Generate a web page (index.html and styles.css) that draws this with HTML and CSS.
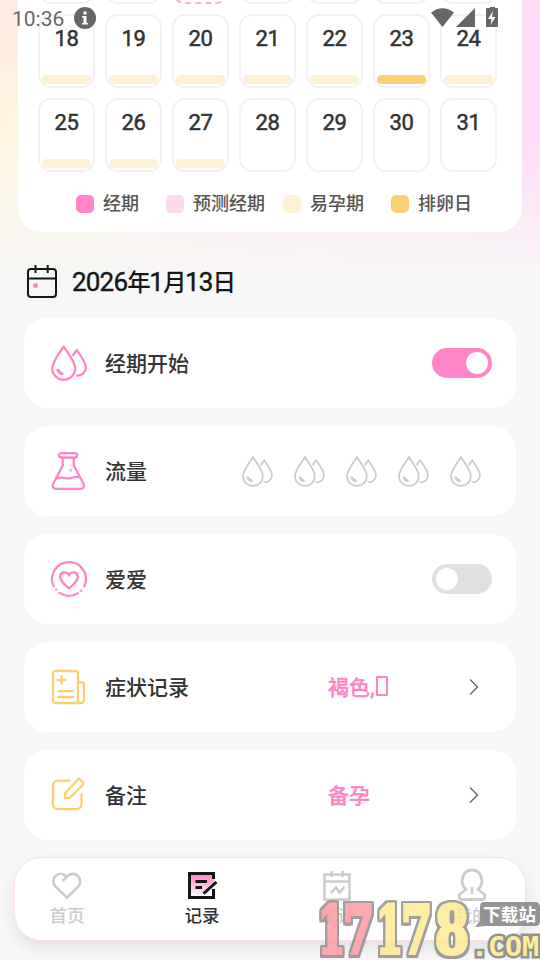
FILE: index.html
```
<!DOCTYPE html>
<html lang="zh-CN">
<head>
<meta charset="utf-8">
<title>记录</title>
<link rel="stylesheet" href="styles.css">
</head>
<body>
<svg class="defs" width="0" height="0" aria-hidden="true">
  <symbol id="drops" viewBox="0 0 36 36" overflow="visible">
    <path d="M12.700 1.500C9 7.500 1.200 16.500 1.200 23.600a11.500 11.200 0 0 0 23 0C24.200 16.500 16.400 7.500 12.700 1.500Z"/>
    <path d="M22.200 10 25.700 5C29.500 10.500 34.800 17 34.800 22.200c0 5.200-3.900 8.500-8.800 8.500"/>
    <path class="shine" d="M6.900 25.200c.7 1.800 2 2.800 4 3.500"/>
  </symbol>
</svg>
<div class="screen">
  <div class="status">
    <span class="clock">10:36</span>
    <svg class="info" width="22" height="22" viewBox="0 0 22 22"><circle cx="11" cy="11" r="11" fill="#666"/><path d="M9.500 4.500h3v3h-3zM8 9h4.500v7H14v1.500H8V16h1.500v-5.500H8z" fill="#fff"/></svg>
    <svg class="signals" width="68" height="22" viewBox="0 0 68 22" fill="#666"><path d="M0 5.500Q11.500-3.200 23 5.500L11.500 20ZM25 20 44 1v19ZM57 1h2V0h5v1h2q1 0 1 1v17q0 1-1 1H56q-1 0-1-1V2q0-1 1-1Z"/><path d="m62 4-5 8h3.500l-1 6 5-8h-3.500z" fill="#fff"/></svg>
  </div>

  <section class="calendar">
    <div class="days">
      <div class="day"></div><div class="day"></div><div class="day today"></div><div class="day"></div><div class="day"></div><div class="day"></div><div class="day"></div>
      <div class="day fertile">18</div><div class="day fertile">19</div><div class="day fertile">20</div><div class="day fertile">21</div><div class="day fertile">22</div><div class="day ovulation">23</div><div class="day fertile">24</div>
      <div class="day fertile">25</div><div class="day fertile">26</div><div class="day fertile">27</div><div class="day">28</div><div class="day">29</div><div class="day">30</div><div class="day">31</div>
    </div>
    <div class="legend">
      <span class="key period">经期</span>
      <span class="key predicted">预测经期</span>
      <span class="key easy">易孕期</span>
      <span class="key egg">排卵日</span>
    </div>
  </section>

  <h1 class="date">
    <svg width="32" height="34" viewBox="0 0 32 34" fill="none" stroke="#161616" stroke-width="2"><rect x="2" y="5" width="28" height="28" rx="3"/><path d="M2 14.500h28M9.500 1v8M21.700 1v8"/><circle cx="9.500" cy="21.500" r="2.500" fill="#ff85c6" stroke="none"/></svg>
    <span class="date-text">2026<b>年</b>1<b>月</b>13<b>日</b></span>
  </h1>

  <main class="rows">
    <div class="row">
      <svg class="icon pink" viewBox="0 0 36 36"><use href="#drops"/></svg>
      <span class="label">经期开始</span>
      <span class="switch on"></span>
    </div>
    <div class="row">
      <svg class="icon pink" viewBox="0 0 36 36"><path d="M10 .2h14a2 2 0 0 1 2 2c0 1.500-.9 2.300-2.300 2.300h-13C9.200 4.500 8 3.700 8 2.200a2 2 0 0 1 2-2ZM11.700 5v7.500L2.200 30.800c-1.400 2.800.2 5 3 5h24c3 0 4.700-2.200 3.300-5L22.800 12.500V5"/><path d="M5.500 25.500c7-2.500 10 1.300 15-.6 3-1.200 6-1.300 8.500-.8"/><circle cx="19.500" cy="17.500" r=".3"/></svg>
      <span class="label">流量</span>
      <span class="flow">
        <svg viewBox="0 0 36 36"><use href="#drops"/></svg><svg viewBox="0 0 36 36"><use href="#drops"/></svg><svg viewBox="0 0 36 36"><use href="#drops"/></svg><svg viewBox="0 0 36 36"><use href="#drops"/></svg><svg viewBox="0 0 36 36"><use href="#drops"/></svg>
      </span>
    </div>
    <div class="row">
      <svg class="icon pink" viewBox="0 0 36 36"><path d="M2.700 25.200A16.900 16.900 0 1 1 33.300 25.200M8.500 31.900A16.900 16.900 0 0 0 26.800 32.300"/><circle cx="5.200" cy="28.800" r=".4"/><circle cx="30" cy="29.500" r=".4"/><path d="M18 14.200c-2.200-4.300-8.800-3.400-8.800 1.500 0 4.500 4 7.500 8.800 11.600 4.800-4.100 8.800-7.100 8.800-11.600 0-4.900-6.600-5.800-8.800-1.500Z"/></svg>
      <span class="label">爱爱</span>
      <span class="switch"></span>
    </div>
    <div class="row">
      <svg class="icon gold" viewBox="0 0 36 36"><path d="M27 32V4.500a2.500 2.500 0 0 0-2.500-2.500H4.500A2.500 2.500 0 0 0 2 4.500V31a3 3 0 0 0 3 3h25a3 3 0 0 0 3-3V15.500a2.300 2.300 0 0 0-2.300-2.300H27V31q0 3 3 3M10.500 7v8M6.500 11h8M7 22.200h15M7 28h15"/></svg>
      <span class="label">症状记录</span>
      <span class="value">褐色,<i class="missing"></i></span>
      <svg class="chevron" width="12" height="18" viewBox="0 0 12 18"><path d="m2 1.500 7.500 7.500L2 16.500"/></svg>
    </div>
    <div class="row">
      <svg class="icon gold" viewBox="0 0 36 36"><path d="M18.500 3.700H7A5 5 0 0 0 2 8.700v18.500a5 5 0 0 0 5 5h18.500a5 5 0 0 0 5-5v-10M14 20.800v-4.500L27 2.500q1-1 2 0l3 3q1 1 0 2L18.500 21.200H14Z"/></svg>
      <span class="label">备注</span>
      <span class="value">备孕</span>
      <svg class="chevron" width="12" height="18" viewBox="0 0 12 18"><path d="m2 1.500 7.500 7.500L2 16.500"/></svg>
    </div>
  </main>

  <nav class="tabs">
    <div class="tab">
      <svg width="32" height="32" viewBox="0 0 32 32" fill="none" stroke="#ccc" stroke-width="2.600"><path d="m11.500 12 4.800-4.700c2.700-2.700 7.200-3.500 10.300-.5 3.500 3.500 3.200 8 .5 10.900L16 28.600 4.700 17.700c-3-3-3.200-7.600-.3-10.600 3.100-3.200 7.400-2.900 10.300-.1"/></svg>
      <span>首页</span>
    </div>
    <div class="tab active">
      <svg width="32" height="32" viewBox="0 0 32 32" fill="none" stroke="#161616" stroke-width="3"><defs><linearGradient id="page" x2="0" y2="1"><stop stop-color="#ff80c6"/><stop offset="1" stop-color="#fff"/></linearGradient></defs><path d="M3 4.500h25V15L18 28H3Z" fill="url(#page)" stroke="none"/><path d="M27.500 10V4.500H3.500v24h24V20M9.500 12.500H21M9.500 18.500H16M17.500 24.700 30.500 13"/></svg>
      <span>记录</span>
    </div>
    <div class="tab">
      <svg width="32" height="32" viewBox="0 0 32 32" fill="none" stroke="#ccc" stroke-width="2.600"><path d="M3.500 5.500h25v25h-25zM3.500 12.500h25M10.500 2v6M21.500 2v6M10 24l5-5.500 3.500 5 5-5.500"/></svg>
      <span>统计</span>
    </div>
    <div class="tab">
      <svg width="32" height="34" viewBox="0 0 32 34" fill="none" stroke="#ccc" stroke-width="2.800"><path d="M10 21.500c-7.500-7-3-19.500 6-19.500s13.500 12.500 6 19.500l6.500 5q1 5-2 5h-21q-3 0-2-5ZM16 19v7"/></svg>
      <span>我的</span>
    </div>
  </nav>

  <svg class="watermark" width="224" height="64" viewBox="316 896 224 64">
    <g class="digits">
      <g class="red"><text x="318" y="953" textLength="27" lengthAdjust="spacingAndGlyphs">1</text><text x="343" y="953" textLength="31" lengthAdjust="spacingAndGlyphs">7</text></g>
      <g class="yellow"><text x="376" y="953" textLength="27" lengthAdjust="spacingAndGlyphs">1</text><text x="401" y="953" textLength="31" lengthAdjust="spacingAndGlyphs">7</text><text x="435" y="953" textLength="34" lengthAdjust="spacingAndGlyphs">8</text></g>
    </g>
    <text class="com" x="471" y="956" textLength="68" lengthAdjust="spacingAndGlyphs">.COM</text>
    <path d="M484 902h51q5 0 5 5v14q0 5-5 5h-49l-11 1 5-6v-14q0-5 4-5Z" fill="#868686" fill-opacity=".88"/>
    <text class="site" x="483" y="921" textLength="53">下载站</text>
  </svg>
</div>
</body>
</html>
```
FILE: styles.css
```
* { box-sizing: border-box; }
body { margin: 0; }
.defs { position: absolute; }
.screen {
  position: relative;
  width: 540px;
  height: 960px;
  overflow: hidden;
  font-family: Roboto, "Noto Sans CJK SC", sans-serif;
  font-weight: 500;
  color: #333;
  background:
    linear-gradient(180deg, rgba(247,247,247,0) 0, rgba(247,247,247,0) 130px, #f7f7f7 285px),
    linear-gradient(170deg, rgba(255,232,226,.85) 0, rgba(255,232,226,0) 110px),
    linear-gradient(90deg, #fff5df 0, #fdebe9 45%, #ffdaf5 100%);
}
.status {
  position: absolute;
  z-index: 2;
  top: 7px;
  left: 12px;
  right: 41px;
  height: 22px;
  display: flex;
  align-items: center;
  font-size: 21px;
  font-weight: 400;
  color: #666;
}
.clock { width: 62px; line-height: 22px; padding-top: 1px; }
.signals { margin-left: auto; }

.calendar {
  display: flow-root;
  height: 232px;
  margin: 0 18px;
  padding: 0 20px;
  background: #fff;
  border-radius: 0 0 24px 24px;
}
.days {
  display: grid;
  grid-template-columns: repeat(7, 57px);
  grid-auto-rows: 74px;
  gap: 10px;
  margin-top: -70px;
}
.day {
  display: flex;
  flex-direction: column;
  align-items: center;
  justify-content: space-between;
  padding: 9px 2px 2px;
  border: 2px solid #f2f2f2;
  border-radius: 13px;
  font-size: 22px;
  font-weight: 400;
  line-height: 28px;
  letter-spacing: -.3px;
  -webkit-text-stroke: .5px #333;
}
.today { border: 2px dashed #ffb0da; }
.fertile::after, .ovulation::after {
  content: "";
  width: 49px;
  height: 9px;
  border-radius: 5px;
  background: #fdf0d3;
}
.ovulation::after { background: #fad171; }
.legend {
  display: flex;
  gap: 27px;
  padding-left: 38px;
  margin-top: 19px;
  font-size: 18px;
  line-height: 26px;
  color: #555;
}
.key { display: flex; align-items: center; gap: 9px; white-space: nowrap; }
.key::before { content: ""; width: 18px; height: 18px; border-radius: 5px; background: #ff85c6; }
.predicted { margin-right: -9px; }
.predicted::before { background: #ffd9ee; }
.easy::before { background: #fdf0d3; }
.egg::before { background: #fad171; }

.date {
  display: flex;
  align-items: center;
  gap: 14px;
  height: 86px;
  margin: 0;
  padding: 12px 26px 0;
  font-size: 26px;
  font-weight: 400;
  letter-spacing: -.8px;
  color: #161616;
}
.date-text { padding-bottom: 1px; -webkit-text-stroke: .4px #161616; }
.date-text b { font-size: 23.500px; font-weight: 500; letter-spacing: -1.600px; -webkit-text-stroke: 0; }
.rows { display: grid; grid-auto-rows: 90px; gap: 18px; padding: 0 24px; }
.row {
  display: flex;
  align-items: center;
  padding: 0 24px 0 27px;
  background: #fff;
  border-radius: 24px;
  font-size: 21px;
}
.icon {
  width: 36px;
  height: 36px;
  margin-right: 18px;
  fill: none;
  stroke-width: 2.3;
  stroke-linecap: round;
  stroke-linejoin: round;
  overflow: visible;
}
.shine { stroke-width: 3.2; }
.pink { stroke: #ff85c6; }
.gold { stroke: #fad171; }
.label { flex: 1; padding-bottom: 2px; }
.switch { width: 60px; height: 30px; padding: 4px; border-radius: 15px; background: #e0e0e0; }
.switch::before { content: ""; display: block; width: 22px; height: 22px; border-radius: 50%; background: #fff; }
.on { background: #ff85c6; }
.on::before { margin-left: auto; }
.flow { display: flex; gap: 21px; padding-right: 11px; }
.flow svg { width: 31px; height: 31px; fill: none; stroke: #ccc; stroke-width: 2.1; stroke-linecap: round; overflow: visible; }
.value { width: 140px; padding-bottom: 2px; color: #ff85c6; display: flex; align-items: center; -webkit-text-stroke: .4px #ff85c6; }
.missing { width: 12px; height: 20px; border: 2px solid #ff85c6; margin-left: 1px; }
.chevron { margin-right: 12px; fill: none; stroke: #666; stroke-width: 1.4; }

.tabs {
  position: absolute;
  top: 857px;
  left: 14px;
  width: 512px;
  height: 84px;
  padding: 10px 0 0;
  margin: 0;
  display: grid;
  grid-template-columns: repeat(4, 135px);
  justify-content: center;
  background: #fff;
  border: 1px solid #ffe0ef;
  border-radius: 28px;
  box-shadow: 0 7px 16px rgba(0,0,0,.09);
}
.tab { display: flex; flex-direction: column; align-items: center; padding-right: 1px; font-size: 17.500px; line-height: 24px; color: #ccc; }
.tab svg { height: 34px; }
.tab span { margin-top: 2px; }
.active { color: #333; }

.watermark { position: absolute; right: 0; bottom: 0; z-index: 3; }
.watermark text { paint-order: stroke; stroke-linejoin: miter; }
.digits {
  font: bold 66px "DejaVu Serif", serif;
  stroke-width: 4px;
  opacity: .88;
  filter: drop-shadow(2px 0 0 #929292) drop-shadow(-2px 0 0 #929292) drop-shadow(0 3px 0 #929292) drop-shadow(0 -2px 0 #929292);
}
.red { fill: #ff9ea7; stroke: #ff9ea7; }
.yellow { fill: #ffeb99; stroke: #ffeb99; }
.com { font: bold 26px "DejaVu Sans Mono", monospace; fill: #ffeb99; stroke: #929292; stroke-width: 5px; }
.site { font: bold 17.500px "Noto Sans CJK SC", sans-serif; fill: #fff; }
```
